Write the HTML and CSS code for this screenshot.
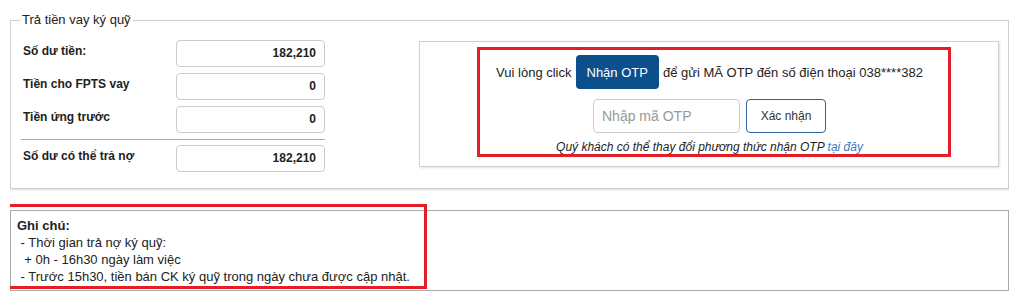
FILE: index.html
```html
<!DOCTYPE html>
<html>
<head>
    <meta charset="utf-8">
    <title>Trả tiền vay ký quỹ</title>
    <link rel="stylesheet" href="styles.css">
</head>
<body>

    <fieldset class="repay-box">
        <legend>Trả tiền vay ký quỹ</legend>

        <div class="repay-inner">
            <!-- balances column -->
            <div class="balance-col">
                <div class="balance-row">
                    <label>Số dư tiền:</label>
                    <div class="amount">182,210</div>
                </div>
                <div class="balance-row">
                    <label>Tiền cho FPTS vay</label>
                    <div class="amount">0</div>
                </div>
                <div class="balance-row">
                    <label>Tiền ứng trước</label>
                    <div class="amount">0</div>
                </div>
                <hr class="balance-line">
                <div class="balance-row">
                    <label>Số dư có thể trả nợ</label>
                    <div class="amount">182,210</div>
                </div>
            </div>

            <!-- otp panel -->
            <div class="otp-panel">
                <div class="otp-frame">
                    <div class="otp-send">
                        <span>Vui lòng click</span>
                        <button class="btn-otp">Nhận OTP</button>
                        <span>để gửi MÃ OTP đến số điện thoại 038****382</span>
                    </div>
                    <div class="otp-confirm">
                        <input class="otp-input" type="text" placeholder="Nhập mã OTP">
                        <button class="btn-confirm">Xác nhận</button>
                    </div>
                    <p class="otp-note">Quý khách có thể thay đổi phương thức nhận OTP <a href="#">tại đây</a></p>
                </div>
            </div>
        </div>
    </fieldset>

    <div class="note-box">
        <div class="note-mark"></div>
        <b>Ghi chú:</b><br>
        &nbsp;- Thời gian trả nợ ký quỹ:<br>
        &nbsp;&nbsp;+ 0h - 16h30 ngày làm việc<br>
        &nbsp;- Trước 15h30, tiền bán CK ký quỹ trong ngày chưa được cập nhật.
    </div>

</body>
</html>
```

FILE: styles.css
```css
body {
    font-family: Arial, "Liberation Sans", sans-serif;
    color: #222;
    margin: 0 8px 0 10px;
    padding: 0;
    background: #fff;
}

.repay-box {
    margin: 12px 0 0 0;
    padding: 12px 9px 16px 12px;
    border: 1px solid #cfcfcf;
    box-shadow: 1px 1px 2px rgba(0, 0, 0, 0.15);
    min-width: 0;
}

.repay-box legend {
    font-size: 13px;
    line-height: 16px;
    padding: 0 2px;
    margin-left: -3px;
}

.repay-inner {
    display: flex;
    align-items: flex-start;
}

/* left side: balances */
.balance-col {
    width: 302px;
    flex: none;
}

.balance-row {
    display: flex;
    margin-bottom: 6px;
}

.balance-row:last-child {
    margin-bottom: 0;
}

.balance-row label {
    width: 153px;
    font-size: 12px;
    font-weight: bold;
    line-height: 14px;
    padding-top: 4px;
}

.amount {
    box-sizing: border-box;
    width: 149px;
    height: 27px;
    border: 1px solid #ccc;
    border-radius: 4px;
    font-size: 12px;
    font-weight: bold;
    line-height: 25px;
    text-align: right;
    padding-right: 8px;
}

.balance-line {
    border: 0;
    border-top: 1px solid #a8a8a8;
    margin: 0 0 5px -2px;
    width: 304px;
}

/* right side: otp */
.otp-panel {
    flex: 1;
    margin: 1px 0 0 94px;
    height: 126px;
    box-sizing: border-box;
    border: 1px solid #d0d0d0;
    box-shadow: 1px 1px 2px rgba(0, 0, 0, 0.12);
    padding: 5px 47px 9px 57px;
}

.otp-frame {
    height: 110px;
    box-sizing: border-box;
    border: 3px solid #e41e26;
    padding: 5px 9px 0 0;
    text-align: center;
}

.otp-send {
    display: flex;
    justify-content: center;
    align-items: center;
    gap: 4px;
    font-size: 13px;
    height: 34px;
}

.btn-otp {
    height: 34px;
    padding: 0 11px;
    background-color: #0b4f8c;
    color: #fff;
    border: 0;
    border-radius: 4px;
    font-family: inherit;
    font-size: 13px;
    cursor: pointer;
}

.otp-confirm {
    display: flex;
    justify-content: center;
    gap: 6px;
    margin-top: 10px;
}

.otp-input {
    box-sizing: border-box;
    width: 147px;
    height: 34px;
    border: 1px solid #ccc;
    border-radius: 4px;
    padding: 0 8px;
    font-family: inherit;
    font-size: 14px;
}

.otp-input::placeholder {
    color: #999;
}

.btn-confirm {
    box-sizing: border-box;
    width: 80px;
    height: 34px;
    background: #fff;
    border: 1px solid #2d64a0;
    border-radius: 4px;
    color: #333;
    font-family: inherit;
    font-size: 12px;
    cursor: pointer;
}

.otp-note {
    margin: 7px 0 0 0;
    font-size: 12px;
    line-height: 14px;
    font-style: italic;
}

.otp-note a {
    color: #3b7bbf;
    text-decoration: none;
}

/* notes */
.note-box {
    position: relative;
    margin-top: 21px;
    border: 1px solid #aaa;
    padding: 6px 6px 5px 6px;
    font-size: 13px;
    line-height: 17px;
}

/* red highlight drawn over the notes */
.note-mark {
    position: absolute;
    left: -6px;
    top: -7px;
    width: 422px;
    height: 85px;
    box-sizing: border-box;
    border: 3px solid #e41e26;
}
```
